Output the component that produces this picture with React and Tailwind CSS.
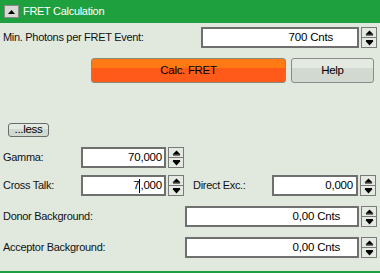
import React from "react";

const font = { fontFamily: '"Liberation Sans", Arial, sans-serif' };

function Spinner() {
  return (
    <div className="flex flex-col w-[16px] h-[21px] border border-[#7a7a7a] bg-[#e4e9e2] shrink-0">
      <div className="flex-1 flex items-center justify-center border-b border-[#7a7a7a]">
        <svg width="9" height="6" viewBox="0 0 9 6"><path d="M4.5 0.5 L8.5 4.5 L0.5 4.5 Z" fill="#000" /><rect x="1" y="4.5" width="7" height="1" fill="#000" /></svg>
      </div>
      <div className="flex-1 flex items-center justify-center">
        <svg width="9" height="6" viewBox="0 0 9 6"><rect x="1" y="0" width="7" height="1" fill="#000" /><path d="M0.5 1 L8.5 1 L4.5 5.5 Z" fill="#000" /></svg>
      </div>
    </div>
  );
}

function Field({ value, width, pr, cursor }) {
  return (
    <div className="flex items-center gap-[2px]">
      <div
        className="h-[21px] border-2 border-[#6f6f6f] bg-white flex items-center justify-end text-[11.5px] tracking-[-0.2px] text-black leading-none"
        style={{ width, paddingRight: pr }}
      >
        {cursor ? (
          <span className="flex items-center">
            7<span className="inline-block w-[1px] h-[14px] bg-black" />,000
          </span>
        ) : (
          value
        )}
      </div>
      <Spinner />
    </div>
  );
}

export default function App() {
  return (
    <div className="w-[380px] h-[273px] bg-[#e1e9df] flex flex-col border-b-2 border-[#1f9e3f] text-[11px] tracking-[-0.3px] text-[#111]" style={font}>
      <div className="h-[23px] bg-[#1ea03e] flex items-center shrink-0">
        <div className="ml-[4px] w-[15px] h-[13px] bg-[#d6dbd3] border border-[#8a8a8a] flex items-center justify-center">
          <svg width="7" height="4" viewBox="0 0 7 4"><path d="M3.5 0 L7 4 L0 4 Z" fill="#000" /></svg>
        </div>
        <span className="ml-[4px] text-white text-[11px]">FRET Calculation</span>
      </div>

      <div className="mt-[4px] flex items-center pl-[3px] pr-[3px]">
        <span className="flex-1">Min. Photons per FRET Event:</span>
        <Field value="700 Cnts" width={158} pr={24} />
      </div>

      <div className="mt-[10px] flex pl-[91px] gap-[5px]">
        <button className="w-[195px] h-[25px] rounded-[3px] border border-[#8a8a7a] text-[11.5px] text-black bg-[linear-gradient(#ff7a14_0,#ff7a14_40%,#ff5a1a_40%,#ff5a1a_100%)]">
          Calc. FRET
        </button>
        <button className="w-[83px] h-[25px] rounded-[3px] border border-[#8a8a8a] text-[11.5px] text-black bg-[linear-gradient(#e4e9e2_0,#e4e9e2_40%,#d2d9d0_40%,#d2d9d0_100%)]">
          Help
        </button>
      </div>

      <div className="mt-[40px] pl-[8px]">
        <button className="w-[41px] h-[14px] rounded-[3px] border border-[#6a6a6a] text-[11.5px] leading-none text-black bg-[linear-gradient(#e4e9e2_0,#e4e9e2_40%,#d2d9d0_40%,#d2d9d0_100%)] flex items-center justify-center">
          ...less
        </button>
      </div>

      <div className="mt-[10px] flex items-center pl-[3px]">
        <span className="w-[78px]">Gamma:</span>
        <Field value="70,000" width={85} pr={2} />
      </div>

      <div className="mt-[7px] flex items-center pl-[3px]">
        <span className="w-[78px]">Cross Talk:</span>
        <Field value="7,000" width={85} pr={2} cursor />
        <span className="ml-[9px] w-[79px]">Direct Exc.:</span>
        <Field value="0,000" width={86} pr={3} />
      </div>

      <div className="mt-[10px] flex items-center pl-[3px] pr-[3px]">
        <span className="flex-1">Donor Background:</span>
        <Field value="0,00 Cnts" width={174} pr={17} />
      </div>

      <div className="mt-[10px] flex items-center pl-[3px] pr-[3px]">
        <span className="flex-1">Acceptor Background:</span>
        <Field value="0,00 Cnts" width={174} pr={17} />
      </div>
    </div>
  );
}
